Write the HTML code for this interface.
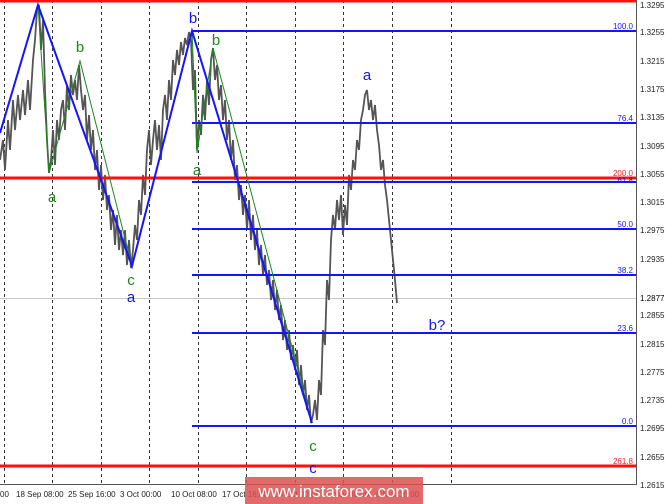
<!DOCTYPE html>
<html><head><meta charset="utf-8"><style>
html,body{margin:0;padding:0;background:#fff;}
svg{display:block;font-family:"Liberation Sans",sans-serif;}
</style></head><body>
<svg width="665" height="504" viewBox="0 0 665 504" xmlns="http://www.w3.org/2000/svg">
<rect width="665" height="504" fill="#fff"/>
<g stroke="#333" stroke-width="1" stroke-dasharray="3,3">
<line x1="4.5" y1="0" x2="4.5" y2="484"/><line x1="52.5" y1="0" x2="52.5" y2="484"/>
<line x1="101.5" y1="0" x2="101.5" y2="484"/><line x1="149.5" y1="0" x2="149.5" y2="484"/>
<line x1="198.5" y1="0" x2="198.5" y2="484"/><line x1="246.5" y1="0" x2="246.5" y2="484"/>
<line x1="295.5" y1="0" x2="295.5" y2="484"/><line x1="343.5" y1="0" x2="343.5" y2="484"/>
<line x1="392.5" y1="0" x2="392.5" y2="484"/><line x1="451.5" y1="0" x2="451.5" y2="484"/>
</g>
<line x1="0" y1="298.5" x2="636" y2="298.5" stroke="#c8c8c8"/>
<polyline fill="none" stroke="#555" stroke-width="1.8" points="0,160 3,140 5,170 8,120 10,150 13,100 15,130 18,95 20,120 23,90 25,115 28,80 30,110 33,60 35,40 37,10 39,5 41,50 43,20 45,90 47,140 49,173 51,160 53,130 55,165 57,120 59,140 61,110 63,100 65,130 67,85 69,110 71,75 73,95 75,80 77,100 79,65 81,90 83,110 85,95 87,140 89,115 91,150 93,130 95,170 97,150 99,190 101,165 103,200 105,175 107,210 109,195 111,230 113,210 115,245 117,215 119,250 121,230 123,255 125,230 127,265 129,240 131,268 133,250 135,225 137,240 139,200 141,215 143,175 145,195 147,150 149,130 151,165 153,140 155,120 157,150 159,125 161,160 163,110 165,95 167,120 169,80 171,100 173,60 175,75 177,50 179,65 181,42 183,55 185,38 187,45 189,32 191,40 193,90 195,70 197,150 199,120 201,135 203,95 205,120 207,80 209,105 211,60 213,48 215,80 217,65 219,100 221,85 223,120 225,100 227,140 229,120 231,160 233,140 235,180 237,165 239,200 241,185 243,215 245,195 247,230 249,200 251,240 253,215 255,250 257,230 259,265 261,245 263,275 265,255 267,285 269,270 271,300 273,280 275,310 277,290 279,320 281,305 283,340 285,320 287,350 289,330 291,360 293,345 295,370 297,350 299,385 301,365 303,395 305,380 307,410 309,395 311,423 313,415 315,400 317,420 319,380 321,395 323,330 325,345 327,280 329,300 331,240 333,215 335,230 337,200 339,220 341,195 343,235 345,205 347,225 349,175 351,190 353,160 355,170 357,140 359,150 361,120 363,110 365,95 367,90 369,110 371,100 373,120 375,105 377,130 379,145 381,170 383,160 385,185 387,200 389,220 391,240 393,260 395,280 397,303"/>
<g stroke="#1414ff" stroke-width="2">
<line x1="192" y1="31" x2="636" y2="31"/><line x1="192" y1="123" x2="636" y2="123"/>
<line x1="192" y1="182" x2="636" y2="182"/><line x1="192" y1="229" x2="636" y2="229"/>
<line x1="192" y1="275" x2="636" y2="275"/><line x1="192" y1="333" x2="636" y2="333"/>
<line x1="192" y1="426" x2="636" y2="426"/>
</g>
<g stroke="#ff1010" stroke-width="3">
<line x1="0" y1="1" x2="636" y2="1"/><line x1="0" y1="178" x2="636" y2="178"/>
<line x1="0" y1="466" x2="636" y2="466"/>
</g>
<polyline fill="none" stroke="#1a8a1a" stroke-width="1" points="38,5 49,173 80,61 132,266"/>
<polyline fill="none" stroke="#1a8a1a" stroke-width="1" points="192,31 197,153 213,48 312,423"/>
<polyline fill="none" stroke="#1414ff" stroke-width="2" points="0,133 38,5 132,266 192,31 312,423"/>
<g font-size="15" fill="#1a8a1a" text-anchor="middle">
<text x="52" y="202">a</text><text x="80" y="52">b</text><text x="131" y="285">c</text>
<text x="197" y="175">a</text><text x="216" y="45">b</text><text x="313" y="451">c</text>
</g>
<g font-size="15" fill="#1414ff" text-anchor="middle">
<text x="131" y="302">a</text><text x="193" y="23">b</text><text x="367" y="80">a</text>
<text x="437" y="330">b?</text><text x="313" y="473">c</text>
</g>
<g font-size="8" fill="#1414ff" text-anchor="end">
<text x="633" y="29">100.0</text><text x="633" y="121">76.4</text><text x="633" y="183">61.8</text>
<text x="633" y="227">50.0</text><text x="633" y="273">38.2</text><text x="633" y="331">23.6</text>
<text x="633" y="424">0.0</text>
</g>
<g font-size="8" fill="#ff2020" text-anchor="end">
<text x="633" y="176">200.0</text><text x="633" y="464">261.8</text>
</g>
<line x1="636.5" y1="0" x2="636.5" y2="484" stroke="#555"/>
<line x1="0" y1="484.5" x2="637" y2="484.5" stroke="#555"/>
<g font-size="8" fill="#222">
<text x="640" y="8">1.3295</text><text x="640" y="35">1.3255</text><text x="640" y="64">1.3215</text>
<text x="640" y="92">1.3175</text><text x="640" y="120">1.3135</text><text x="640" y="149">1.3095</text>
<text x="640" y="177">1.3055</text><text x="640" y="205">1.3015</text><text x="640" y="233">1.2975</text>
<text x="640" y="262">1.2935</text><text x="640" y="318">1.2855</text>
<text x="640" y="347">1.2815</text><text x="640" y="375">1.2775</text><text x="640" y="403">1.2735</text>
<text x="640" y="431">1.2695</text><text x="640" y="460">1.2655</text><text x="640" y="488">1.2615</text>
</g>
<rect x="637" y="293" width="28" height="10" fill="#fff"/>
<text x="640" y="301" font-size="8" fill="#000">1.2877</text>
<g font-size="8" fill="#222">
<text x="0" y="497">00</text><text x="16" y="497">18 Sep 08:00</text><text x="68" y="497">25 Sep 16:00</text>
<text x="120" y="497">3 Oct 00:00</text><text x="171" y="497">10 Oct 08:00</text><text x="222" y="497">17 Oct 16:00</text>
<text x="274" y="497">25 Oct 00:00</text><text x="326" y="497">1 Nov 08:00</text><text x="376" y="497">8 Nov 16:00</text>
</g>
<rect x="245" y="477" width="178" height="27" fill="#dc5050" fill-opacity="0.85"/>
<text x="334" y="497" font-size="17" fill="#fff" text-anchor="middle">www.instaforex.com</text>
</svg>
</body></html>
